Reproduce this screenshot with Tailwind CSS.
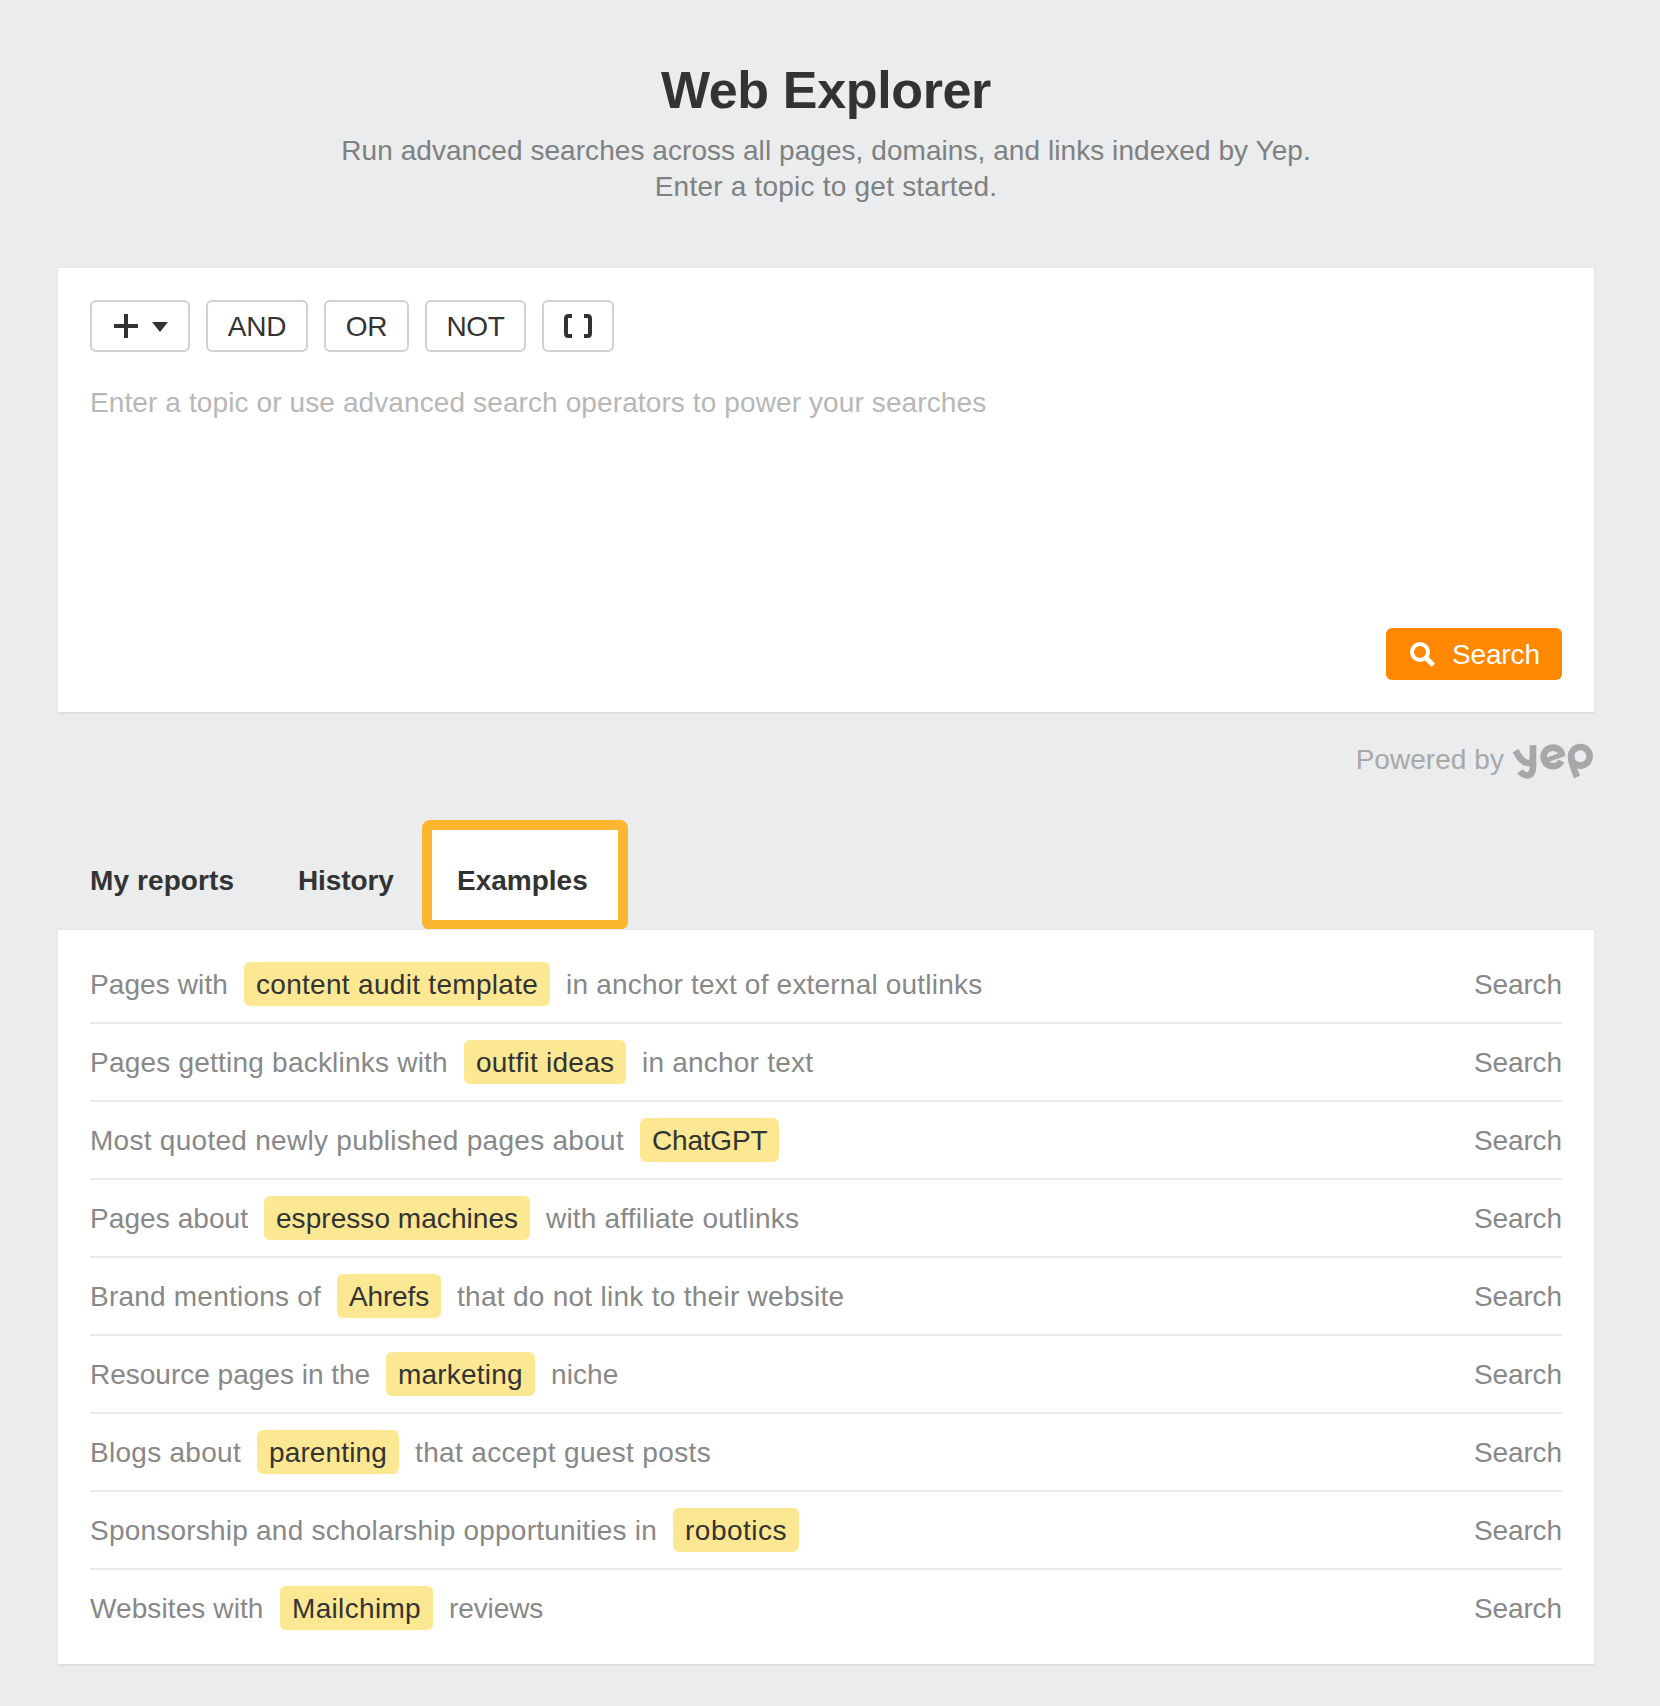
<!DOCTYPE html>
<html lang="en">
<head>
<meta charset="utf-8">
<title>Web Explorer</title>
<script src="https://cdn.jsdelivr.net/npm/@tailwindcss/browser@4"></script>
</head>
<body class="bg-[#eaecee] font-['Liberation_Sans',Arial,sans-serif] text-[28px] leading-9 text-[#333] whitespace-nowrap">
<main class="w-[1536px] ml-[58px] pt-[60px] h-[1706px] flex flex-col">

  <header class="text-center">
    <h1 class="text-[52px] leading-[60px] font-bold tracking-[-0.35px]">Web Explorer</h1>
    <p class="mt-[13px] text-[#7f8080]">
      <span class="block tracking-[0.06px]">Run advanced searches across all pages, domains, and links indexed by Yep.</span>
      <span class="block tracking-[0.22px]">Enter a topic to get started.</span>
    </p>
  </header>

  <section class="mt-[63px] h-[444px] bg-white p-8 flex flex-col shadow-[0_2px_0_#dfe0e2,0_0_0_1px_#e6e7e9]">
    <div class="flex gap-4">
      <button class="w-[100px] h-[52px] border-2 border-[#d1d1d1] rounded-md flex items-center pl-[22px] gap-[14px]">
        <svg class="w-6 h-6" viewBox="0 0 24 24" fill="#333"><path d="M10 0h4v10h10v4H14v10h-4V14H0v-4h10z"/></svg>
        <svg class="w-4 h-[10px] mt-[2px]" viewBox="0 0 16 10" fill="#333"><path d="M0 0h16L8 10z"/></svg>
      </button>
      <button class="w-[102px] h-[52px] border-2 border-[#d1d1d1] rounded-md flex items-center justify-center pt-0.5 tracking-[-0.2px]">AND</button>
      <button class="w-[85px] h-[52px] border-2 border-[#d1d1d1] rounded-md flex items-center justify-center pt-0.5 tracking-[-0.2px]">OR</button>
      <button class="w-[101px] h-[52px] border-2 border-[#d1d1d1] rounded-md flex items-center justify-center pt-0.5 tracking-[-0.3px]">NOT</button>
      <button class="w-[72px] h-[52px] border-2 border-[#d1d1d1] rounded-md flex items-center justify-center">
        <svg class="w-7 h-6" viewBox="0 0 28 24" fill="none" stroke="#333" stroke-width="4"><path d="M8 2H4.500Q2 2 2 4.500V19.500Q2 22 4.500 22H8M20 2h3.500Q26 2 26 4.500V19.500Q26 22 23.500 22H20"/></svg>
      </button>
    </div>
    <p class="mt-[33px] text-[#b7b7b7] tracking-[0.11px]">Enter a topic or use advanced search operators to power your searches</p>
    <button class="mt-auto self-end w-[176px] h-[52px] rounded-md bg-[#ff8800] text-white flex items-center pl-6 gap-4">
      <svg class="w-[26px] h-[26px] mt-0.5" viewBox="0 0 26 26" fill="none" stroke="#fff"><circle cx="10" cy="10" r="8" stroke-width="4"/><path d="M15.300 15.300l8 8" stroke-width="5"/></svg>
      <span class="pt-0.5 tracking-[-0.15px]">Search</span>
    </button>
  </section>

  <div class="mt-[28px] h-9 flex justify-end items-center gap-2 text-[#a7a9a8]">
    <span class="pt-[3px] tracking-[0.05px]">Powered by</span>
    <svg class="w-[82px] h-9 mt-[5px]" viewBox="515 430 246 108" fill="none" stroke="#a7a9a8" stroke-width="20" role="img" aria-label="yep">
      <path d="M526 453C536 471 546 491 565 490Q574 489 578 482"/>
      <path d="M578 437V500Q577 527 560 527Q548 527 539 515"/>
      <path d="M663 484A28 28 0 1 1 661 456"/>
      <path d="M612 484L673 462" stroke-width="15"/>
      <path d="M654 448Q664 455 666 467" stroke-width="18"/>
      <circle cx="720" cy="470" r="28"/>
      <path d="M692 470Q693 491 710 532"/>
    </svg>
  </div>

  <nav class="mt-[44px] h-[110px] flex font-bold">
    <a class="w-[208px] pl-8 pt-[43px] tracking-[0.1px]">My reports</a>
    <a class="w-[156px] pl-8 pt-[43px] tracking-[-0.1px]">History</a>
    <a class="w-[206px] border-10 border-[#fdb62f] rounded-lg bg-white">
      <span class="block h-full bg-white pl-[25px] pt-[33px]">Examples</span>
    </a>
  </nav>

  <section class="h-[734px] bg-white px-8 pt-4 text-[#888] shadow-[0_2px_0_#dfe0e2,0_0_0_1px_#e6e7e9]">
    <div class="h-[78px] border-b-2 border-[#e9eaeb] flex items-center gap-4 [&>span]:pt-0.5">
      <span class="w-[138px] tracking-[0.1px]">Pages with</span>
      <mark class="w-[306px] h-11 px-3 rounded-md bg-[#fce792] text-[#333] leading-[46px] tracking-[0.3px]">content audit template</mark>
      <span class="tracking-[0.2px]">in anchor text of external outlinks</span>
      <a class="ml-auto pt-0.5 tracking-[-0.1px]">Search</a>
    </div>
    <div class="h-[78px] border-b-2 border-[#e9eaeb] flex items-center gap-4 [&>span]:pt-0.5">
      <span class="w-[358px] tracking-[0.22px]">Pages getting backlinks with</span>
      <mark class="w-[162px] h-11 px-3 rounded-md bg-[#fce792] text-[#333] leading-[46px] tracking-[0.23px]">outfit ideas</mark>
      <span class="tracking-[0.22px]">in anchor text</span>
      <a class="ml-auto pt-0.5 tracking-[-0.1px]">Search</a>
    </div>
    <div class="h-[78px] border-b-2 border-[#e9eaeb] flex items-center gap-4 [&>span]:pt-0.5">
      <span class="w-[534px] tracking-[0.28px]">Most quoted newly published pages about</span>
      <mark class="w-[139px] h-11 px-3 rounded-md bg-[#fce792] text-[#333] leading-[46px] tracking-[-0.2px]">ChatGPT</mark>
      <a class="ml-auto pt-0.5 tracking-[-0.1px]">Search</a>
    </div>
    <div class="h-[78px] border-b-2 border-[#e9eaeb] flex items-center gap-4 [&>span]:pt-0.5">
      <span class="w-[158px] tracking-[0.08px]">Pages about</span>
      <mark class="w-[266px] h-11 px-3 rounded-md bg-[#fce792] text-[#333] leading-[46px] tracking-[0.05px]">espresso machines</mark>
      <span class="tracking-[0.2px]">with affiliate outlinks</span>
      <a class="ml-auto pt-0.5 tracking-[-0.1px]">Search</a>
    </div>
    <div class="h-[78px] border-b-2 border-[#e9eaeb] flex items-center gap-4 [&>span]:pt-0.5">
      <span class="w-[231px] tracking-[0.22px]">Brand mentions of</span>
      <mark class="w-[104px] h-11 px-3 rounded-md bg-[#fce792] text-[#333] leading-[46px] tracking-[-0.15px]">Ahrefs</mark>
      <span class="tracking-[0.28px]">that do not link to their website</span>
      <a class="ml-auto pt-0.5 tracking-[-0.1px]">Search</a>
    </div>
    <div class="h-[78px] border-b-2 border-[#e9eaeb] flex items-center gap-4 [&>span]:pt-0.5">
      <span class="w-[280px]">Resource pages in the</span>
      <mark class="w-[149px] h-11 px-3 rounded-md bg-[#fce792] text-[#333] leading-[46px] tracking-[0.2px]">marketing</mark>
      <span class="tracking-[0.1px]">niche</span>
      <a class="ml-auto pt-0.5 tracking-[-0.1px]">Search</a>
    </div>
    <div class="h-[78px] border-b-2 border-[#e9eaeb] flex items-center gap-4 [&>span]:pt-0.5">
      <span class="w-[151px] tracking-[0.28px]">Blogs about</span>
      <mark class="w-[142px] h-11 px-3 rounded-md bg-[#fce792] text-[#333] leading-[46px] tracking-[0.13px]">parenting</mark>
      <span class="tracking-[0.35px]">that accept guest posts</span>
      <a class="ml-auto pt-0.5 tracking-[-0.1px]">Search</a>
    </div>
    <div class="h-[78px] border-b-2 border-[#e9eaeb] flex items-center gap-4 [&>span]:pt-0.5">
      <span class="w-[567px] tracking-[0.22px]">Sponsorship and scholarship opportunities in</span>
      <mark class="w-[126px] h-11 px-3 rounded-md bg-[#fce792] text-[#333] leading-[46px] tracking-[0.5px]">robotics</mark>
      <a class="ml-auto pt-0.5 tracking-[-0.1px]">Search</a>
    </div>
    <div class="h-[76px] flex items-center gap-4 [&>span]:pt-0.5">
      <span class="w-[174px] tracking-[0.1px]">Websites with</span>
      <mark class="w-[153px] h-11 px-3 rounded-md bg-[#fce792] text-[#333] leading-[46px] tracking-[0.33px]">Mailchimp</mark>
      <span class="tracking-[-0.1px]">reviews</span>
      <a class="ml-auto pt-0.5 tracking-[-0.1px]">Search</a>
    </div>
  </section>
</main>
</body>
</html>
